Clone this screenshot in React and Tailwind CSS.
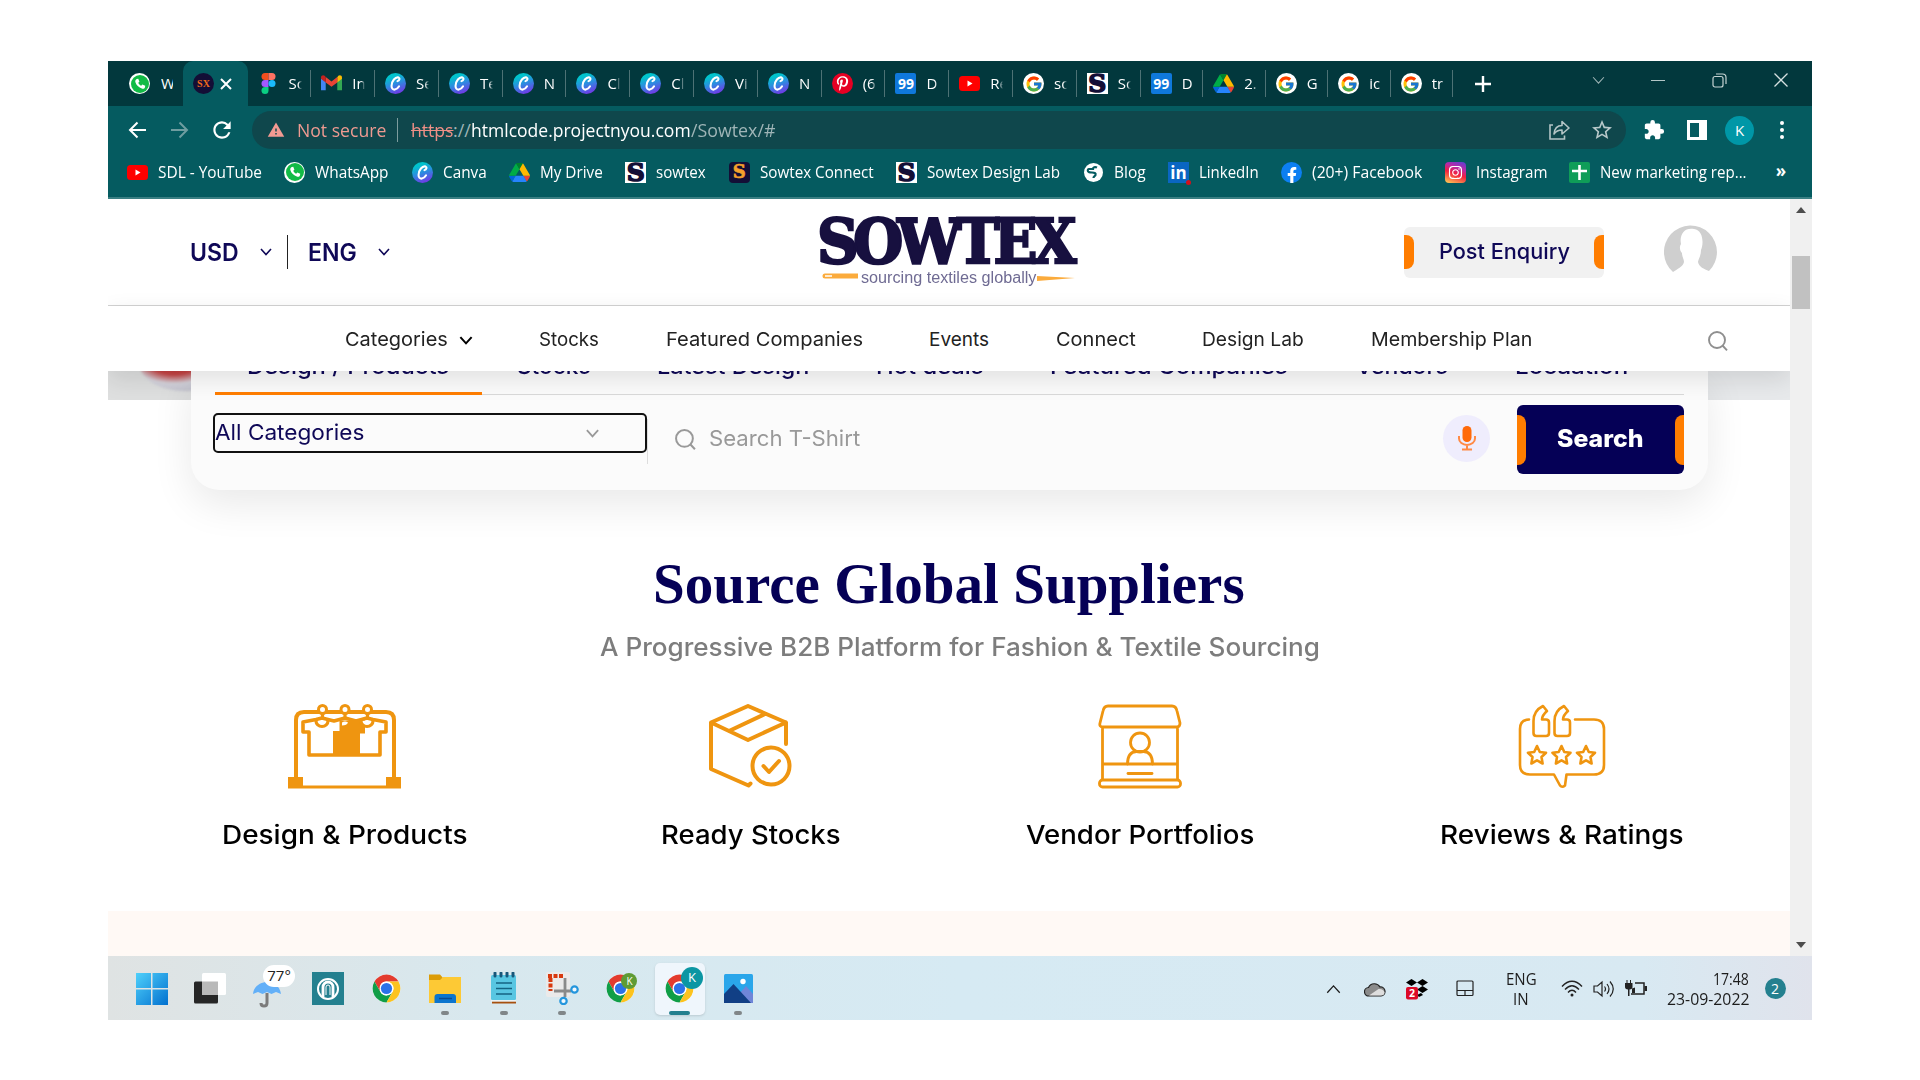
import React, { useLayoutEffect, useRef } from "react";
import { FcGoogle } from "react-icons/fc";
import { FaWhatsapp, FaPinterestP, FaFacebookF, FaInstagram } from "react-icons/fa";
import { MdExtension, MdRefresh, MdWarning, MdStarBorder } from "react-icons/md";

/* Text whose glyph run is stretched to fill the width of its box. */
function Fit({ className = "", children }) {
  const box = useRef(null);
  const run = useRef(null);
  useLayoutEffect(() => {
    const s = box.current.clientWidth / run.current.offsetWidth;
    run.current.style.transform = `scaleX(${s})`;
  }, []);
  return (
    <span ref={box} className={`block shrink-0 whitespace-nowrap ${className}`}>
      <span ref={run} className="inline-block origin-left">{children}</span>
    </span>
  );
}

/* ---------- site icons ---------- */
const box = "w-[21px] h-[21px] shrink-0";

const WhatsApp = () => (
  <span className={`${box} rounded-full bg-white flex items-center justify-center`}>
    <span className="w-[18px] h-[18px] rounded-full bg-[#12bb46] flex items-center justify-center">
      <svg viewBox="0 0 24 24" className="w-3.5 h-3.5" fill="#fff"><path d="M6.6 3.5 9 3l2 5-2 2c1 2.300 2.700 4 5 5l2-2 5 2-.5 2.500c-.5 2-2.500 3-4.500 2.500C9.500 18 5.500 14 4 8.500c-.5-2 .6-4.500 2.600-5z" /></svg>
    </span>
  </span>
);
const Canva = () => (
  <span className={`${box} rounded-full bg-[linear-gradient(160deg,#00c4cc_20%,#2b8ee0_50%,#7d2ae8_95%)] flex items-center justify-center`}>
    <svg viewBox="0 0 24 24" className="w-[19px] h-[19px]" fill="none" stroke="#fff" strokeWidth="2.600" strokeLinecap="round">
      <path d="M14.500 9c2.500-.8 3.500-3.500 1.500-4.500C12 3 7 9 7 15c0 3.500 2 5 4.200 4.700 2-.3 4-2 5.300-4.200" />
    </svg>
  </span>
);
const YouTube = () => (
  <svg viewBox="0 0 21 21" className={box}><rect x="0" y="3" width="21" height="15" rx="3.500" fill="#f00" /><path d="M8.500 7.500v6l5-3z" fill="#fff" /></svg>
);
const Drive = () => (
  <svg viewBox="0 0 87.300 78" className={box}>
    <path d="m6.600 66.850 3.850 6.650c.8 1.400 1.950 2.500 3.300 3.300l13.750-23.800h-27.500c0 1.550.4 3.100 1.200 4.500z" fill="#0066da" />
    <path d="m43.650 25-13.750-23.800c-1.350.8-2.500 1.900-3.300 3.300l-25.400 44a9.060 9.060 0 0 0-1.200 4.500h27.500z" fill="#00ac47" />
    <path d="m73.550 76.800c1.350-.8 2.500-1.900 3.300-3.300l1.600-2.750 7.650-13.250c.8-1.400 1.200-2.950 1.200-4.500h-27.502l5.852 11.500z" fill="#ea4335" />
    <path d="m43.650 25 13.750-23.800c-1.350-.8-2.900-1.200-4.500-1.200h-18.500c-1.600 0-3.150.45-4.500 1.200z" fill="#00832d" />
    <path d="m59.800 53h-32.300l-13.750 23.800c1.350.8 2.900 1.200 4.500 1.200h50.800c1.600 0 3.150-.45 4.500-1.200z" fill="#2684fc" />
    <path d="m73.400 26.500-12.700-22c-.8-1.400-1.950-2.500-3.300-3.300l-13.750 23.800 16.150 28h27.450c0-1.550-.4-3.100-1.200-4.500z" fill="#ffba00" />
  </svg>
);
const Sow = () => (
  <span className={`${box} bg-white flex items-center justify-center overflow-hidden text-[25px] leading-none font-bold text-[#130e36] font-['DejaVu_Serif'] [-webkit-text-stroke:1.500px_#130e36]`}>S</span>
);
const SowConnect = () => (
  <span className={`${box} rounded-[4px] bg-[#130e36] flex items-center justify-center text-[18px] leading-none font-bold text-[#f5a12c] font-['DejaVu_Serif'] [-webkit-text-stroke:0.600px_#f5a12c]`}>S</span>
);
const Figma = () => (
  <svg viewBox="0 0 14 21" className="w-[21px] h-[21px] shrink-0">
    <path d="M3.500 0H7v7H3.500a3.500 3.500 0 0 1 0-7z" fill="#f24e1e" /><path d="M7 0h3.500a3.500 3.500 0 0 1 0 7H7z" fill="#ff7262" />
    <path d="M3.500 7H7v7H3.500a3.500 3.500 0 0 1 0-7z" fill="#a259ff" /><circle cx="10.500" cy="10.500" r="3.500" fill="#1abcfe" />
    <path d="M3.500 14H7v3.500A3.500 3.500 0 1 1 3.500 14z" fill="#0acf83" />
  </svg>
);
const Gmail = () => (
  <svg viewBox="0 0 20 16" className="w-[21px] h-[17px] shrink-0">
    <path d="M0 3v11.500h4.500V6z" fill="#4285f4" /><path d="M15.500 6v8.500H20V3z" fill="#34a853" />
    <path d="M15.500 2v5L20 3.500V2.200C20 .2 17.800-.5 16.500.6z" fill="#fbbc04" /><path d="M4.500 7V1.700L10 6l5.500-4.300V7L10 11z" fill="#ea4335" />
    <path d="M0 2.200v1.300L4.500 7V1.700L3.500.6C2.200-.5 0 .2 0 2.200z" fill="#c5221f" />
  </svg>
);
const Pinterest = () => (
  <span className={`${box} rounded-full bg-[#e60023] flex items-center justify-center`}><FaPinterestP color="#fff" size={15} /></span>
);
const NinetyNine = () => (
  <span className={`${box} rounded-[2px] bg-[#0f78db] text-white text-[14px] leading-none font-bold font-['Open_Sans'] flex items-center justify-center`}>99</span>
);
const Google = () => (
  <span className={`${box} rounded-full bg-white flex items-center justify-center`}><FcGoogle size={18} /></span>
);
const Blog = () => (
  <svg viewBox="0 0 21 21" className={box}><circle cx="10.500" cy="10.500" r="9.500" fill="#fff" />
    <path d="M14 5.500c-2-1-4-.3-4 1.500h-4c-1 0-1.500 1-1 2.200.5 1 2 1.300 4 1.300 3 0 4 1 3.500 2.500-.5 1.300-2 1-2 3" fill="none" stroke="#055b60" strokeWidth="2.200" /></svg>
);
const LinkedIn = () => (
  <span className={`${box} relative bg-[#0a66c2] text-white text-[17px] leading-none font-bold font-['Open_Sans'] flex items-center justify-center`}>in
    <span className="absolute -right-0.5 -bottom-0.5 w-[5px] h-[5px] rounded-full bg-[#d5101c]" /></span>
);
const Facebook = () => (
  <span className={`${box} rounded-full bg-[#0c7ff2] flex items-end justify-center`}><FaFacebookF color="#fff" size={16} /></span>
);
const Instagram = () => (
  <span className={`${box} rounded-[4px] bg-[linear-gradient(20deg,#fec053_5%,#f2203e_45%,#b729a8_70%,#5342d6)] flex items-center justify-center`}><FaInstagram color="#fff" size={15} /></span>
);
const Sheets = () => (
  <svg viewBox="0 0 21 21" className={box}><rect width="21" height="21" rx="2" fill="#0f9d58" /><path d="M10.500 3v15M3 9h15" stroke="#fff" strokeWidth="2.600" /></svg>
);
const Chrome = ({ className = "w-[29px] h-[29px]" }) => (
  <svg viewBox="0 0 48 48" className={className}>
    <circle cx="24" cy="24" r="23" fill="#fff" />
    <path d="M4.100 12.500A23 23 0 0 1 43.900 12.500H24A11.500 11.500 0 0 0 14 18.200L14 29.800z" fill="#e33b2e" />
    <path d="M4.100 12.500 14 29.800A11.500 11.500 0 0 0 24 35.500L33.900 29.800 24 47A23 23 0 0 1 4.100 12.500z" fill="#109e47" />
    <path d="M43.900 12.500A23 23 0 0 1 24 47L33.900 29.800A11.500 11.500 0 0 0 24 12.500z" fill="#fcc31e" />
    <circle cx="24" cy="24" r="11.500" fill="#fff" /><circle cx="24" cy="24" r="9.300" fill="#2b72e8" />
  </svg>
);
const Chevron = ({ className, up }) => (
  <svg viewBox="0 0 12 8" className={`shrink-0 ${className}`} fill="none" stroke="currentColor"><path d={up ? "M1 7l5-5.500L11 7" : "M1 1l5 5.500L11 1"} /></svg>
);
const Magnifier = ({ className }) => (
  <svg viewBox="0 0 20 20" className={`shrink-0 ${className}`} fill="none" stroke="currentColor" strokeWidth="1.900"><circle cx="9" cy="9" r="8" /><path d="M14.500 14.500 19 19.300" /></svg>
);

/* ---------- browser chrome ---------- */
const tabs = [
  [Figma, "Sc"], [Gmail, "Inb"], [Canva, "Se"], [Canva, "Te"], [Canva, "N"], [Canva, "Cl"], [Canva, "Cl"], [Canva, "Vi"], [Canva, "N"],
  [Pinterest, "(6)"], [NinetyNine, "D"], [YouTube, "Re"], [Google, "sc"], [Sow, "Sc"], [NinetyNine, "D"], [Drive, "2."], [Google, "G"], [Google, "ic"], [Google, "tr"],
];

function TabStrip() {
  return (
    <div className="flex h-[45px] bg-[#02383d] text-white">
      <div className="flex w-[75px] items-center pl-[21px]">
        <WhatsApp /><span className="ml-[11px] w-3 overflow-hidden text-[15px]">W</span>
      </div>
      <div className="flex w-[64.500px] items-center rounded-t-[10px] bg-[#055b60]">
        <span className="ml-[10px] flex h-[21px] w-[21px] items-center justify-center rounded-full bg-[#130e36] font-['Liberation_Serif'] text-[10px] font-bold text-[#f26a1b]">SX</span>
        <svg viewBox="0 0 12 12" className="ml-[6px] h-3 w-3" stroke="#fff" strokeWidth="2"><path d="M1 1l10 10M11 1 1 11" /></svg>
      </div>
      {tabs.map(([Icon, t], i) => (
        <div key={i} className={`flex shrink-0 items-center pl-[10px] ${i < 14 ? "w-[63.800px]" : "w-[62.500px]"}`}>
          <Icon />
          <span className="ml-[10px] w-[13px] overflow-hidden whitespace-nowrap text-[15px] [mask-image:linear-gradient(90deg,#000_70%,transparent)]">{t}</span>
          <span className="ml-auto h-[27px] w-px bg-[#4d7275]" />
        </div>
      ))}
      <svg viewBox="0 0 16 16" className="ml-[22px] mt-[15px] h-4 w-4" stroke="#fff" strokeWidth="2.400"><path d="M8 0v16M0 8h16" /></svg>
      <Chevron className="ml-[101px] mt-[15px] h-[9px] w-[13px] text-[#9db4b5]" />
      <span className="ml-[46px] mt-[19px] h-px w-[14px] bg-[#b3c6c7]" />
      <svg viewBox="0 0 15 15" className="ml-[47px] mt-3 h-[15px] w-[15px]" fill="none" stroke="#c5d3d3" strokeWidth="1.200"><rect x="1" y="3.500" width="10" height="10.500" rx="2" /><path d="M4 1h6.500A3.500 3.500 0 0 1 14 4.500V11" /></svg>
      <svg viewBox="0 0 14 14" className="ml-[47px] mt-3 h-[14px] w-[14px]" stroke="#d5e0e0" strokeWidth="1.300"><path d="M.5.5l13 13M13.500.5l-13 13" /></svg>
    </div>
  );
}

function Toolbar() {
  return (
    <div className="flex h-[48px] items-center bg-[#055b60] pl-[20px]">
      <svg viewBox="0 0 18 18" className="h-[18px] w-[18px]" fill="none" stroke="#fff" strokeWidth="2"><path d="M18 9H2M9.500 1.500 2 9l7.500 7.500" /></svg>
      <svg viewBox="0 0 18 18" className="ml-[25px] h-[18px] w-[18px]" fill="none" stroke="#6f9da0" strokeWidth="2"><path d="M0 9h16M8.500 1.500 16 9l-7.500 7.500" /></svg>
      <MdRefresh className="ml-[20px] h-[26px] w-[26px] text-white" />
      <div className="ml-[17px] flex h-[38px] w-[1374px] items-center rounded-full bg-[#0f474c] pl-[15px] text-[18px]">
        <MdWarning className="h-[18px] w-[18px] text-[#f29a92]" />
        <Fit className="ml-[12px] w-[89px] text-[#ee9a91]">Not secure</Fit>
        <span className="ml-[11px] h-6 w-px bg-[#7d9c9e]" />
        <Fit className="ml-[13px] w-[42px] text-[#ee8f86] [&>span]:line-through">https</Fit>
        <Fit className="w-[18px] text-[#9fb5b7]">://</Fit>
        <Fit className="w-[220px] text-white">htmlcode.projectnyou.com</Fit>
        <Fit className="w-[84px] text-[#9fb5b7]">/Sowtex/#</Fit>
        <svg viewBox="0 0 21 20" className="ml-[774px] h-5 w-[21px]" fill="none" stroke="#b4c5c6" strokeWidth="1.600"><path d="M4 5H1v14h14.500v-3.500" /><path d="M5 14c.5-5.500 3.500-8.500 8-8.500V1.500L20 8l-7 6v-4c-3.500 0-6 1-8 4z" strokeLinejoin="round" /></svg>
        <MdStarBorder className="ml-[20px] h-6 w-6 text-[#b9c9ca]" />
      </div>
      <MdExtension className="ml-[17px] h-[22px] w-[22px] text-white" />
      <span className="ml-[22px] h-5 w-5 border-[3px] border-r-[8px] border-white" />
      <span className="ml-[18px] flex h-[29px] w-[29px] items-center justify-center rounded-full bg-[#0097a7] text-[15px] text-white">K</span>
      <span className="ml-[26px] flex flex-col gap-[3px]">{[0, 1, 2].map((i) => <i key={i} className="h-1 w-1 rounded-full bg-white" />)}</span>
    </div>
  );
}

const marks = [
  [YouTube, "SDL - YouTube", "w-[104px]"], [WhatsApp, "WhatsApp", "w-[74px]"], [Canva, "Canva", "w-[43.500px]"], [Drive, "My Drive", "w-[63px]"],
  [Sow, "sowtex", "w-[50px]"], [SowConnect, "Sowtex Connect", "w-[114px]"], [Sow, "Sowtex Design Lab", "w-[133px]"], [Blog, "Blog", "w-[32px]"],
  [LinkedIn, "LinkedIn", "w-[60px]"], [Facebook, "(20+) Facebook", "w-[110px]"], [Instagram, "Instagram", "w-[71px]"], [Sheets, "New marketing rep...", "w-[147px]"],
];

function Bookmarks() {
  return (
    <div className="flex h-[45px] items-center gap-[22.450px] border-b-2 border-[#3a7f83] bg-[#055b60] pb-[7px] pl-[19px] text-[16px] text-white">
      {marks.map(([Icon, t, w], i) => (
        <div key={i} className="flex items-center gap-[10px]"><Icon /><Fit className={w}>{t}</Fit></div>
      ))}
      <span className="ml-1.5 pb-1 text-[17px] font-bold leading-none">»</span>
    </div>
  );
}

/* ---------- website ---------- */
function Header() {
  return (
    <div className="flex h-[107px] items-center border-b border-[#d2d2d2] bg-white pl-[82px] text-[#0f0857]">
      <Fit className="mt-0.5 w-[49px] text-[24px] font-semibold">USD</Fit>
      <Chevron className="ml-[21px] h-2 w-3 [stroke-width:1.600]" />
      <span className="ml-[15px] h-[34px] w-px bg-[#222]" />
      <Fit className="mt-0.5 ml-[20px] w-[49px] text-[24px] font-semibold">ENG</Fit>
      <Chevron className="ml-[21px] h-2 w-3 [stroke-width:1.600]" />
      <div className="ml-[428px] flex h-[72px] w-[261px] flex-col">
        <Fit className="-ml-[1px] h-[51px] w-[254px] font-['DejaVu_Serif'] text-[62px] font-bold leading-[52px] tracking-[-0.100em] text-[#17103f] [-webkit-text-stroke:2.500px_#17103f]">SOWTEX</Fit>
        <div className="flex h-[18px] items-center pl-1">
          <svg viewBox="0 0 36 6" className="h-[6px] w-[36px]"><path d="M3 .5h33v5H3a2.500 2.500 0 0 1 0-5z" fill="#fbab3c" /><path d="M3 3h7" stroke="#fff" strokeWidth="1.500" /></svg>
          <Fit className="mt-1 ml-[3px] w-[175px] font-['Liberation_Sans'] text-[16px] leading-[18px] text-[#6f6b93]">sourcing textiles globally</Fit>
          <svg viewBox="0 0 38 5" className="ml-[1px] mt-1 h-[5px] w-[38px]"><path d="M0 0 38 2 0 5z" fill="#fbab3c" /></svg>
        </div>
      </div>
      <div className="ml-[325px] flex h-[51px] w-[200px] items-center justify-between rounded-[6px] bg-[#f1f1f1]">
        <span className="h-[34px] w-[10px] rounded-r-[8px] bg-[#ff7d00]" />
        <Fit className="-mt-0.5 w-[131px] text-[22px] font-medium">Post Enquiry</Fit>
        <span className="h-[34px] w-[10px] rounded-l-[8px] bg-[#ff7d00]" />
      </div>
      <svg viewBox="0 0 53 47" className="ml-[60px] mb-2 h-[47px] w-[53px]">
        <path d="M9 47A26.500 26.500 0 1 1 45 46C40 44 35 42 34 37c0-2 3-6 3-12 3-7 2-20-7-21-9-2-15 5-13 15-2 3-1 7 1 9 0 4 2 6 2 9-1 5-7 7-11 10z" fill="#cfcfcf" />
      </svg>
    </div>
  );
}

function Nav() {
  return (
    <div className="relative z-10 flex h-[65px] items-center bg-white pl-[237px] pt-1 text-[19px] text-[#222] shadow-[0_8px_24px_rgba(0,0,0,0.110)]">
      <Fit className="w-[103px]">Categories</Fit>
      <Chevron className="ml-[11px] h-[9px] w-[14px] text-black [stroke-width:1.800]" />
      <Fit className="ml-[66px] w-[60px]">Stocks</Fit>
      <Fit className="ml-[67px] w-[197px]">Featured Companies</Fit>
      <Fit className="ml-[66px] w-[60px]">Events</Fit>
      <Fit className="ml-[67px] w-[80px]">Connect</Fit>
      <Fit className="ml-[66px] w-[102px]">Design Lab</Fit>
      <Fit className="ml-[67px] w-[161px]">Membership Plan</Fit>
      <Magnifier className="ml-[176px] h-5 w-5 text-[#8f8f8f]" />
    </div>
  );
}

function SearchCard() {
  return (
    <div className="relative flex h-[119px] w-[1517px] shrink-0 flex-col rounded-b-[28px] bg-[#fbfbfb] px-6 text-[#0f0857] shadow-[0_14px_40px_rgba(0,0,0,0.090)]">
      <div className="flex h-[24px] items-start border-b border-[#d9d9d9] text-[22px] font-medium leading-[28px]">
        <div className="-mt-[19px] flex pl-[32px]">
          <Fit className="w-[202px]">Design / Products</Fit>
          <Fit className="ml-[68px] w-[74px]">Stocks</Fit>
          <Fit className="ml-[66px] w-[152px]">Latest Design</Fit>
          <Fit className="ml-[67px] w-[108px]">Hot deals</Fit>
          <Fit className="ml-[66px] w-[238px]">Featured Companies</Fit>
          <Fit className="ml-[68px] w-[92px]">Vendors</Fit>
          <Fit className="ml-[67px] w-[113px]">Locaation</Fit>
        </div>
      </div>
      <span className="-mt-[3px] h-[3px] w-[267px] shrink-0 bg-[#ff7d00]" />
      <div className="flex pt-[10px]">
        <div className="mt-2 -ml-[2px] flex h-[40px] w-[435px] items-center rounded-[5px] border-[2.500px] border-[#111]">
          <Fit className="-mt-[2px] w-[149px] text-[22px]">All Categories</Fit>
          <Chevron className="ml-[221px] h-[9px] w-[15px] text-[#999] [stroke-width:1.600]" />
        </div>
        <span className="mt-[14px] h-[45px] w-px bg-[#ddd]" />
        <Magnifier className="ml-[27px] mt-[24px] h-[21px] w-[21px] text-[#999]" />
        <Fit className="ml-[13px] mt-[17px] w-[151px] text-[22px] leading-[32px] text-[#999]">Search T-Shirt</Fit>
        <span className="ml-[583px] mt-[10px] flex h-[47px] w-[47px] items-center justify-center rounded-full bg-[#efedfd]">
          <svg viewBox="0 0 18 25" className="h-[25px] w-[18px]"><rect x="4.500" y="0" width="9" height="16" rx="4.500" fill="#ff6a0a" /><path d="M1 10v2.500a8 6.500 0 0 0 16 0V10M9 19v4M4 23.500h10" fill="none" stroke="#ff8a45" strokeWidth="2" /></svg>
        </span>
        <div className="ml-[27px] flex h-[69px] w-[167px] items-center justify-between overflow-hidden rounded-[6px] bg-[#050056]">
          <span className="h-[50px] w-[9px] rounded-r-[8px] bg-[#ff7d00]" />
          <Fit className="-mt-0.5 w-[87px] text-[24px] font-extrabold text-white">Search</Fit>
          <span className="h-[50px] w-[9px] rounded-l-[8px] bg-[#ff7d00]" />
        </div>
      </div>
    </div>
  );
}

const line = { fill: "none", stroke: "#ef9510", strokeWidth: 4, strokeLinejoin: "round", strokeLinecap: "round" };

const Rack = () => (
  <svg viewBox="0 0 114 85" className="h-[85px] w-[114px]" {...line} strokeLinecap="butt">
    <path d="M8 74V16q0-8 8-8h82q8 0 8 8v58" />
    <path d="M0 83h113" strokeWidth="3" />
    <path d="M0 73h15v11H0zM98 73h15v11H98z" fill="#ef9510" stroke="none" />
    <path d="M21 51V28h-6V18l13-2.500 6-1.500 12 3 11-3 11 3 11-3 6 1.500 13 2.500v10h-6v23z" strokeWidth="3.600" />
    <path d="M45 52V27h6.500V16.500H77v13h-5V52z" fill="#ef9510" stroke="none" />
    <g fill="#fff" strokeWidth="3.200"><path d="M28 17a6 5.500 0 0 0 12 0M73 17a6 5.500 0 0 0 12 0" /></g>
    <path d="M54 18.500q3-2 6 0-1 3-6 3z" fill="#fff" stroke="none" />
    {[34.500, 57, 79.500].map((x) => <g key={x}><ellipse cx={x} cy="5.500" rx="4" ry="4" strokeWidth="3" fill="#fff" /><path d={`M${x} 9v6`} strokeWidth="3.200" /></g>)}
  </svg>
);
const Package = () => (
  <svg viewBox="0 0 84 85" className="h-[85px] w-[84px]" {...line}>
    <path d="M77 40V18.500L39 2 2 18.500V65l37.500 16.500 2-2M2 18.500 39 36l38-17.500M56 10 20 27" />
    <circle cx="62" cy="62" r="18.500" /><path d="m54.500 62 5.500 6 10-11" />
  </svg>
);
const Booth = () => (
  <svg viewBox="0 0 84 85" className="h-[85px] w-[84px]" {...line} strokeWidth="2.800">
    <path d="M10 2h64q4 0 5 5l3 12q0 4-3 4H5q-4 0-3-4L5 7q1-5 5-5zM4.500 23v52M79.500 23v52M4.500 60h75" />
    <rect x="1.500" y="76" width="81" height="7" rx="3" /><path d="M30 69.500h24" />
    <ellipse cx="42" cy="38.500" rx="9.500" ry="9.500" /><path d="M29.500 60q0-12 9-12.500h7q9 .5 9 12.500" />
  </svg>
);
const Reviews = () => {
  const quote = "M25 2c-6 3-9.500 8-9.500 15v12q0 3 3 3h9.500q3 0 3-3V18.500q0-3-3-3h-4q0-4 5-8.500z";
  const star = "M0-9 2.800-3 9-2.300 4.500 2 5.600 8.500 0 5.400-5.600 8.500-4.500 2-9-2.300-2.800-3z";
  return (
    <svg viewBox="0 0 88 85" className="h-[85px] w-[88px]" {...line} strokeWidth="2.600">
      <path d="M11 15.500Q2 16 2 25v36q0 9.500 10 9.500h24l6 11q2 2.500 5 0l1.500-11H76q10 0 10-9.500V25q0-9.500-10-9.500H57" />
      <path d={quote} /><path d={quote} transform="translate(21 0)" />
      {[19, 43.500, 68].map((x) => <path key={x} d={star} transform={`translate(${x} 51)`} />)}
    </svg>
  );
};

function Section() {
  const label = "text-[26px] font-medium leading-[34px] text-black";
  return (
    <div className="flex flex-col">
      <Fit className="ml-[545px] mt-[57px] w-[592px] font-['Liberation_Serif'] text-[58px] font-bold leading-[74px] text-[#050056]">Source Global Suppliers</Fit>
      <Fit className="ml-[492px] mt-[9px] w-[720px] text-[25px] font-medium leading-[34px] text-[#7d7d7d]">A Progressive B2B Platform for Fashion &amp; Textile Sourcing</Fit>
      <div className="flex pl-[114px] pt-[40px]">
        <div className="flex w-[245px] flex-col items-center gap-[29px]"><Rack /><Fit className={`w-[245px] ${label}`}>Design &amp; Products</Fit></div>
        <div className="ml-[194px] flex w-[180px] flex-col items-center gap-[29px]"><Package /><Fit className={`w-[180px] ${label}`}>Ready Stocks</Fit></div>
        <div className="ml-[185px] flex w-[228px] flex-col items-center gap-[29px]"><Booth /><Fit className={`w-[228px] ${label}`}>Vendor Portfolios</Fit></div>
        <div className="ml-[186px] flex w-[244px] flex-col items-center gap-[29px]"><Reviews /><Fit className={`w-[244px] ${label}`}>Reviews &amp; Ratings</Fit></div>
      </div>
    </div>
  );
}

/* ---------- taskbar ---------- */
const WinLogo = () => (
  <svg viewBox="0 0 32 32" className="h-8 w-8"><defs><linearGradient id="win" x2="1" y2="1"><stop stopColor="#4fd0fb" /><stop offset="1" stopColor="#0270cf" /></linearGradient></defs>
    <path d="M0 0h15v15H0zM16.500 0H32v15H16.500zM0 16.500h15V32H0zM16.500 16.500H32V32H16.500z" fill="url(#win)" /></svg>
);
const TaskView = () => (
  <svg viewBox="0 0 32 32" className="h-8 w-8"><rect x="0" y="8.500" width="24" height="22" rx="1.500" fill="#262626" /><rect x="8" y="0" width="24" height="22" rx="1.500" fill="#fff" /><path d="M8 8.500h16V22H8z" fill="#b9b9b9" /></svg>
);
const Weather = () => (
  <div className="relative h-8 w-8">
    <svg viewBox="0 0 32 36" className="h-9 w-8"><path d="M0 21C1 12 9 9 14 9s13 3 14 12l-5-2-4.500 2-4.500-2-4.500 2L5 19z" fill="#63b0f8" /><path d="M14 20v10q0 3-3 3-3 0-3-3" fill="none" stroke="#7b7b7b" strokeWidth="3" /></svg>
    <span className="absolute -top-2 left-[10px] flex h-[22px] w-[32px] items-center justify-center rounded-full bg-white text-[15px] text-[#222]">77°</span>
  </div>
);
const ArchApp = () => (
  <span className="flex h-[33px] w-8 items-center justify-center bg-[#24808f]">
    <svg viewBox="0 0 24 24" className="h-6 w-6" fill="none" stroke="#fff"><circle cx="12" cy="12" r="10" strokeWidth="2" /><path d="M7 20V10a5 5 0 0 1 10 0v10" strokeWidth="2.800" /><path d="M10 18v-8a2 2 0 0 1 4 0v8" strokeWidth="1" /></svg>
  </span>
);
const Folder = () => (
  <svg viewBox="0 0 32 32" className="h-8 w-8"><path d="M0 1.500h11l3 3.500v4H0z" fill="#dc9c07" /><path d="M0 7h11l3-3h18v26H0z" fill="#fdc935" /><path d="M5.500 30v-6q0-3 3-3H24q3 0 3 3v6z" fill="#0c75ce" /><path d="M10 25.500h13" stroke="#0a4a92" strokeWidth="1.500" /></svg>
);
const Notepad = () => (
  <svg viewBox="0 0 26 33" className="h-[33px] w-[26px]"><rect x="0" y="3" width="25" height="25" rx="1.500" fill="#58c6e2" /><path d="M1 29.500h24v2H1z" fill="#a6500f" /><path d="M0 28.200h25v1.200H0z" fill="#f4f4f4" /><path d="M5 11h16M5 16.500h16M5 22h16" stroke="#146382" strokeWidth="1.600" /><path d="M4 1v3M10 1v3M16 1v3M22 1v3" stroke="#17577a" strokeWidth="3" strokeLinecap="round" /></svg>
);
const Snip = () => (
  <svg viewBox="0 0 33 33" className="h-[33px] w-[33px]"><rect x="0" y="0" width="24" height="25" rx="2" fill="#ebeaea" /><path d="M2 4h15M4.500 6v13" stroke="#d8390f" strokeWidth="4" strokeDasharray="4 1.500" /><path d="M19 6v19M8 19h17" stroke="#8a8a8a" strokeWidth="2.800" /><g fill="#f2f8fc" stroke="#2496dd" strokeWidth="2.200"><circle cx="28.500" cy="17.500" r="3.200" /><circle cx="17.500" cy="29" r="3.200" /></g></svg>
);
const ChromeK = ({ badge }) => (
  <div className="relative h-[29px] w-[29px]"><Chrome /><span className={`absolute flex items-center justify-center rounded-full text-white ${badge}`}>K</span></div>
);
const Photos = () => (
  <svg viewBox="0 0 29 29" className="h-[29px] w-[29px]"><rect width="29" height="29" rx="1.500" fill="#2aa6ea" /><path d="M16 19l6-7 7 8v9H16z" fill="#6f86d8" /><path d="M0 20 9.500 10 27 29H0z" fill="#113f85" /><circle cx="19" cy="7.500" r="2.700" fill="#fff" /></svg>
);
const apps = [
  [<WinLogo />], [<TaskView />], [<Weather />], [<ArchApp />], [<Chrome />], [<Folder />, "dot"], [<Notepad />, "dot"], [<Snip />, "dot"],
  [<ChromeK badge="-top-px left-[15px] h-4 w-4 bg-[#5f9b34] text-[10px]" />],
  [<ChromeK badge="-top-[7px] left-[16px] h-[22px] w-[22px] bg-[#0b96a3] text-[13px]" />, "bar"], [<Photos />, "dot"],
];

function Taskbar() {
  return (
    <div className="flex h-[64px] shrink-0 items-center bg-[linear-gradient(90deg,#dfe3e3_0%,#d8e8ee_22%,#d6eaf3_50%,#d8e9f2_90%,#e0e3ec_100%)] pl-[14.500px] pt-px text-[#1c1c1c]">
      {apps.map(([icon, mark], i) => (
        <div key={i} className="flex w-[58.650px] shrink-0 justify-center">
          <div className={`relative flex h-[52px] w-[50px] items-center justify-center rounded-[5px] ${mark === "bar" ? "bg-[#eff6fc] shadow-sm" : ""}`}>
            {icon}
            {mark && <span className={`absolute rounded-full ${mark === "bar" ? "bottom-0 h-1 w-[21px] bg-[#24808f]" : "bottom-0 h-1 w-2 bg-[#808688]"}`} />}
          </div>
        </div>
      ))}
      <Chevron up className="ml-[557px] h-[10px] w-[17px] [stroke-width:1]" />
      <svg viewBox="0 0 22 16" className="ml-[22px] h-4 w-[22px] shrink-0" stroke="#222" strokeWidth="1.200"><path d="M5 15a4.200 4.200 0 0 1-.5-8.500A6.500 6.500 0 0 1 16 6a4.500 4.500 0 0 1 1 9z" fill="#8b8b8b" /><path d="M5 14.500 14.500 8q5-.5 6 3.500 0 3-3.500 3z" fill="#dedede" stroke="none" /></svg>
      <svg viewBox="0 0 22 22" className="ml-[20px] h-[22px] w-[22px] shrink-0"><path d="m0 4.500 5.500-3.500 5.500 3.500-5.500 3.500zM11 4.500l5.500-3.500L22 4.500l-5.500 3.500zM11 11.500l5.500-3.500 5.500 3.500-5.500 3.500zM11 17l4-2 2 2-4 2z" /><rect y="9" width="12" height="12.500" rx="2" fill="#dc0a28" /><text x="3" y="19" fontSize="10.500" fontWeight="bold" fill="#fff">2</text></svg>
      <svg viewBox="0 0 18 17" className="ml-[28px] h-[17px] w-[18px] shrink-0" fill="none" stroke="#222" strokeWidth="1.200"><rect x="1" y="1" width="16" height="14.500" rx="1" /><path d="M1 10.500h16M9 10.500v5" /></svg>
      <div className="ml-[32px] flex w-[31px] flex-col items-center text-[16px] leading-[20px]"><Fit className="w-[31px]">ENG</Fit><Fit className="w-[16px]">IN</Fit></div>
      <svg viewBox="0 0 22 17" className="ml-[24px] h-[17px] w-[22px] shrink-0" fill="none" stroke="#222" strokeWidth="1.400"><path d="M1 6.500q10-10.500 20 0M4 9.500q7-7.500 14 0M7 12.500q4-4.500 8 0" /><circle cx="11" cy="15" r="1.500" fill="#222" stroke="none" /></svg>
      <svg viewBox="0 0 22 18" className="ml-[10px] h-[18px] w-[22px] shrink-0" fill="none" stroke="#222" strokeWidth="1.200"><path d="M1 6h3.500L9 2v14l-4.500-4H1zM11.500 6.500q2 2.500 0 5M14 4q4 5 0 10M17 1.500q6.500 7.500 0 15" /></svg>
      <svg viewBox="0 0 22 17" className="ml-[10px] h-[17px] w-[22px] shrink-0"><path d="M10 3h9v11H6" fill="none" stroke="#222" strokeWidth="1.500" /><path d="M0 3h7.500v4q0 2-3 2.500V16H3V9.500Q0 9 0 7zM1.500 0h1v3h-1zM5 0h1v3H5zM19.500 6h2.500v5h-2.500zM7 8.500l3-1V13H7z" fill="#222" /></svg>
      <div className="ml-[20px] flex w-[82px] flex-col items-end text-[16px] leading-[20px]"><Fit className="w-[36px]">17:48</Fit><Fit className="w-[82px]">23-09-2022</Fit></div>
      <span className="ml-[16px] flex h-[21px] w-[21px] items-center justify-center rounded-full bg-[#24808f] text-[14px] text-white">2</span>
    </div>
  );
}

export default function App() {
  return (
    <div className="h-[1080px] w-[1920px] overflow-hidden bg-white pl-[108px] pt-[61px] font-['Open_Sans',sans-serif]">
      <div className="flex h-[959px] w-[1704px] flex-col overflow-hidden">
        <TabStrip />
        <Toolbar />
        <Bookmarks />
        <div className="flex h-[757px] shrink-0 font-['Inter',sans-serif]">
          <main className="flex w-[1682px] flex-col overflow-hidden">
            <Header />
            <Nav />
            <div className="flex h-[119px] shrink-0">
              <div className="h-[29px] w-[83px] overflow-hidden bg-[#dedfdf]">
                <div className="ml-[32px] -mt-[32px] h-[52px] w-[90px] rounded-[50%] bg-[radial-gradient(ellipse_at_38%_45%,#b82f30_0%,#c54444_30%,#d6d5dd_52%,#c4c4d0_72%)] blur-[1px]" />
              </div>
              <SearchCard />
              <div className="h-[29px] w-[82px] bg-[#e7e9eb]" />
            </div>
            <Section />
            <div className="mt-auto h-[45px] shrink-0 bg-[#fff9f5]" />
          </main>
          <div className="flex w-[22px] flex-col items-center bg-[#f0f0f0]">
            <span className="mt-2 border-x-[5px] border-b-[6px] border-x-transparent border-b-[#4d4d4d]" />
            <span className="mt-[43px] h-[53px] w-[18px] bg-[#c1c1c1]" />
            <span className="mb-2 mt-auto border-x-[5px] border-t-[6px] border-x-transparent border-t-[#4d4d4d]" />
          </div>
        </div>
        <Taskbar />
      </div>
    </div>
  );
}
